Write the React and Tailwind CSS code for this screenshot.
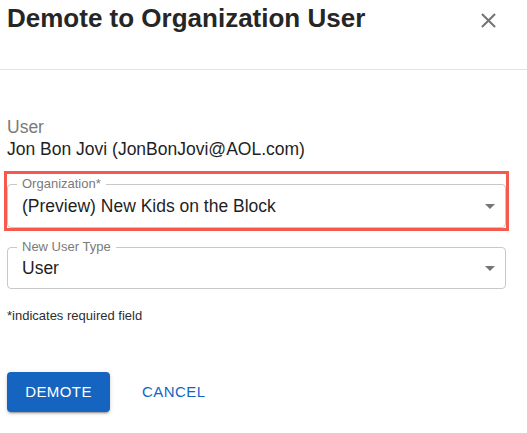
export default function App() {
  return (
    <div className="w-[527px] h-[433px] bg-white overflow-hidden font-['Liberation_Sans',Arial,sans-serif]">
      {/* header */}
      <div className="flex items-start justify-between h-[70px] border-b border-[#e3e3e3]">
        <h2 className="pl-[7px] pt-[3px] text-[26px] leading-[30px] font-bold text-[#262626]">
          Demote to Organization User
        </h2>
        <svg
          viewBox="0 0 24 24"
          className="w-[25px] h-[25px] mt-[8px] mr-[26px] fill-[#757575]"
        >
          <path d="M19 6.41 17.59 5 12 10.59 6.41 5 5 6.41 10.59 12 5 17.59 6.41 19 12 13.41 17.59 19 19 17.59 13.41 12z" />
        </svg>
      </div>

      <div className="pl-[7px] w-[506px]">
        <div className="mt-[46px] text-[17.5px] leading-[22px] text-[#7a7a7a]">User</div>
        <div className="text-[17.5px] leading-[22px] text-[#1f1f1f]">
          Jon Bon Jovi (JonBonJovi@AOL.com)
        </div>

        {/* organization select, highlighted */}
        <div className="relative mt-[24px]">
          <div className="relative flex items-center h-[44px] border border-[#c8c8c8] rounded-[4px] pl-[14px]">
            <span className="absolute left-[9px] -top-[9px] px-[5px] bg-white text-[13px] leading-[16px] text-[#7a7a7a]">
              Organization*
            </span>
            <span className="text-[17.5px] leading-[22px] text-[#1f1f1f]">
              (Preview) New Kids on the Block
            </span>
            <svg viewBox="0 0 24 24" className="absolute right-[3px] w-[24px] h-[24px] fill-[#757575]">
              <path d="M7 10l5 5 5-5z" />
            </svg>
          </div>
          <div className="absolute -left-[3px] -right-[3px] -top-[13px] -bottom-[3px] border-[3px] border-[#f65a4e] pointer-events-none" />
        </div>

        {/* new user type select */}
        <div className="relative flex items-center h-[42px] mt-[19px] border border-[#c8c8c8] rounded-[4px] pl-[14px]">
          <span className="absolute left-[9px] -top-[9px] px-[5px] bg-white text-[13px] leading-[16px] text-[#7a7a7a]">
            New User Type
          </span>
          <span className="text-[17.5px] leading-[22px] text-[#1f1f1f]">User</span>
          <svg viewBox="0 0 24 24" className="absolute right-[3px] w-[24px] h-[24px] fill-[#757575]">
            <path d="M7 10l5 5 5-5z" />
          </svg>
        </div>

        <p className="mt-[19px] text-[13px] leading-[16px] text-[#2e2e2e]">*indicates required field</p>

        <div className="flex items-center mt-[48px]">
          <button className="w-[103px] h-[40px] rounded-[4px] bg-[#1565c0] text-white text-[15px] tracking-[0.43px] shadow-[0_3px_1px_-2px_rgba(0,0,0,0.2),0_2px_2px_0_rgba(0,0,0,0.14),0_1px_5px_0_rgba(0,0,0,0.12)]">
            DEMOTE
          </button>
          <button className="ml-[32px] text-[15px] tracking-[0.43px] text-[#1565c0]">CANCEL</button>
        </div>
      </div>
    </div>
  );
}
